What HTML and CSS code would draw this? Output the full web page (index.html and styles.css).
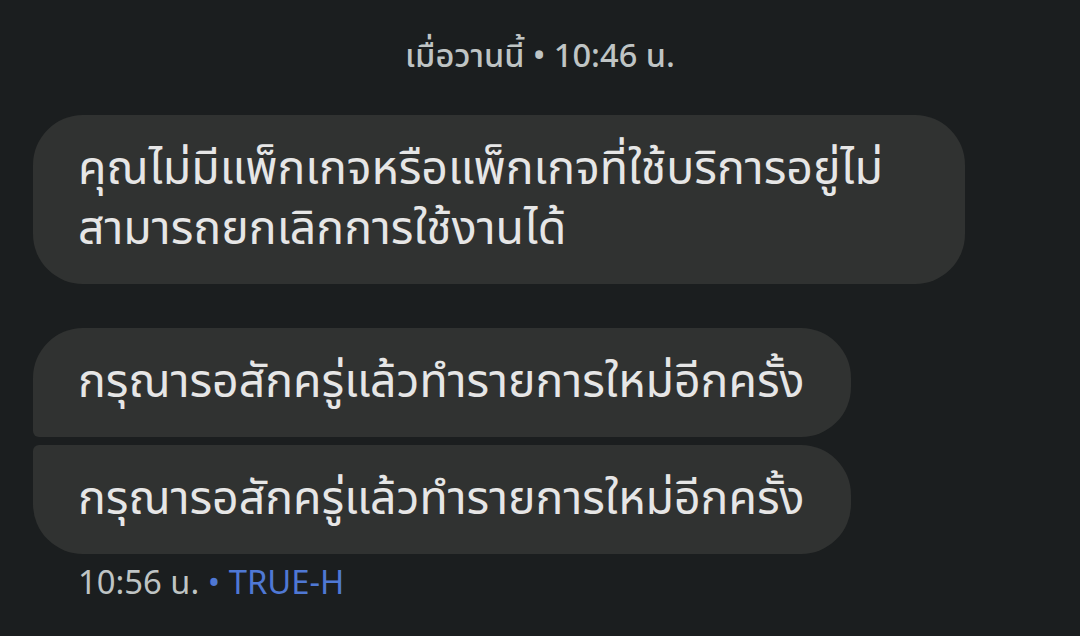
FILE: index.html
```html
<!DOCTYPE html>
<html lang="th">
<head>
    <meta charset="UTF-8">
    <meta name="viewport" content="width=device-width, initial-scale=1.0">
    <title>ข้อความ</title>
    <link rel="stylesheet" href="styles.css">
</head>
<body>
    <main class="thread">
        <div class="day-stamp">เมื่อวานนี้ • 10:46 น.</div>

        <div class="group">
            <div class="bubble bubble-single">คุณไม่มีแพ็กเกจหรือแพ็กเกจที่ใช้บริการอยู่ไม่สามารถยกเลิกการใช้งานได้</div>
        </div>

        <div class="group">
            <div class="bubble bubble-first">กรุณารอสักครู่แล้วทำรายการใหม่อีกครั้ง</div>
            <div class="bubble bubble-last">กรุณารอสักครู่แล้วทำรายการใหม่อีกครั้ง</div>
            <div class="meta">10:56 น. <span class="sender">• TRUE-H</span></div>
        </div>
    </main>
</body>
</html>
```

FILE: styles.css
```css
body {
    margin: 0;
    padding: 0;
    height: 100vh;
    overflow: hidden;
    background-color: #1b1e1f;
    font-family: "Noto Sans Thai", "Noto Sans", Roboto, sans-serif;
    color: #e6e6e6;
}

.thread {
    display: flex;
    flex-direction: column;
    padding: 0 33px;
}

.day-stamp {
    text-align: center;
    color: #bfc4c4;
    font-size: 32.6px;
    font-weight: 500;
    padding-top: 36px;
    line-height: 42px;
    margin-bottom: 37px;
}

.group {
    display: flex;
    flex-direction: column;
    align-items: flex-start;
    gap: 8px;
    margin-bottom: 44px;
}

.bubble {
    background-color: #303231;
    font-size: 46.4px;
    line-height: 60px;
    padding: 25px 47px 24px 45px;
    border-radius: 50px;
    max-width: 840px;
}

.bubble-single {
    width: 840px;
}

.bubble-first {
    border-bottom-left-radius: 6px;
}

.bubble-last {
    border-top-left-radius: 6px;
}

.meta {
    margin: 2px 0 0 45px;
    font-size: 32.8px;
    line-height: 40px;
    color: #bfc4c4;
}

.sender {
    color: #4f78d4;
}
```
